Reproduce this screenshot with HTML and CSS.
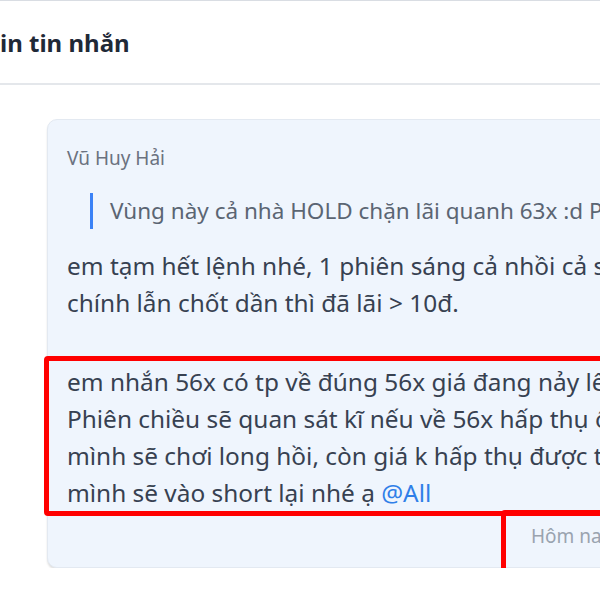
FILE: index.html
```html
<!DOCTYPE html>
<html lang="vi">
<head>
    <meta charset="UTF-8">
    <meta name="viewport" content="width=device-width, initial-scale=1.0">
    <title>Ghim tin nhắn</title>
    <link rel="stylesheet" href="styles.css">
</head>
<body>
    <div class="panel">
        <div class="panel-header">
            <h2 class="panel-title">in tin nhắn</h2>
        </div>

        <div class="panel-body">
            <div class="message">
                <div class="sender">Vũ Huy Hải</div>

                <div class="quote">Vùng này cả nhà HOLD chặn lãi quanh 63x :d Phiên chiều</div>

                <p class="msg-text">em tạm hết lệnh nhé, 1 phiên sáng cả nhồi cả short<br>chính lẫn chốt dần thì đã lãi &gt; 10đ.</p>

                <p class="msg-text">em nhắn 56x có tp về đúng 56x giá đang nảy lên<br>Phiên chiều sẽ quan sát kĩ nếu về 56x hấp thụ ổn<br>mình sẽ chơi long hồi, còn giá k hấp thụ được thì<br>mình sẽ vào short lại nhé ạ <span class="mention">@All</span></p>

                <div class="msg-time">Hôm nay 11:32</div>

                <!-- annotation boxes -->
                <div class="mark mark-text"></div>
                <div class="mark mark-time"></div>
            </div>
        </div>
    </div>
</body>
</html>
```

FILE: styles.css
```css
body {
    margin: 0;
    font-family: "Noto Sans", "Open Sans", sans-serif;
    background-color: #ffffff;
    overflow: hidden;
}

.panel {
    width: 600px;
    border-top: 1px solid #d9dde3;
}

.panel-header {
    height: 82px;
    display: flex;
    align-items: center;
    border-bottom: 2px solid #e4e7eb;
}

.panel-title {
    margin: 0;
    font-size: 24px;
    font-weight: 700;
    color: #1f2937;
}

.panel-body {
    padding: 34px 0 0 47px;
}

.message {
    position: relative;
    width: 700px;
    padding: 28px 0 21px 19px;
    background-color: #eff5fd;
    border: 1px solid #e3e9f1;
    border-radius: 10px;
    box-shadow: 0 2px 2px rgba(0, 0, 0, 0.12);
    white-space: nowrap;
}

.sender {
    font-size: 19px;
    line-height: 20px;
    color: #6b7280;
}

.quote {
    margin: 25px 0 0 23px;
    padding-left: 17px;
    border-left: 3px solid #3b82f6;
    font-size: 22.5px;
    line-height: 36px;
    color: #5b6573;
}

.msg-text {
    margin: 18px 0 0;
    font-size: 24.4px;
    line-height: 37px;
    color: #374151;
}

.msg-text + .msg-text {
    margin-top: 42px;
}

.mention {
    color: #2f7fe8;
}

.msg-time {
    margin-top: 15px;
    padding-left: 464px;
    font-size: 19px;
    line-height: 20px;
    color: #9aa3af;
}

.mark {
    position: absolute;
    border: 5px solid #ff0000;
    border-radius: 4px;
}

.mark-text {
    left: -4px;
    top: 236px;
    width: 700px;
    height: 150px;
}

.mark-time {
    left: 453px;
    top: 390px;
    width: 200px;
    height: 54px;
}
```
